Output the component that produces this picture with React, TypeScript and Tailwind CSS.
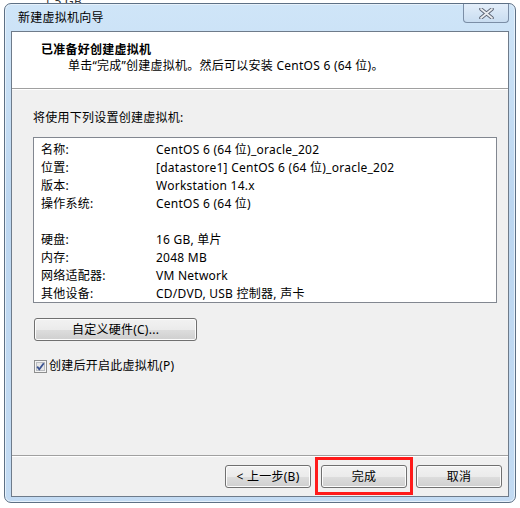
import React from "react";

const rows: [string, string][] = [
  ["名称:", "CentOS 6 (64 位)_oracle_202"],
  ["位置:", "[datastore1] CentOS 6 (64 位)_oracle_202"],
  ["版本:", "Workstation 14.x"],
  ["操作系统:", "CentOS 6 (64 位)"],
  ["", ""],
  ["硬盘:", "16 GB, 单片"],
  ["内存:", "2048 MB"],
  ["网络适配器:", "VM Network"],
  ["其他设备:", "CD/DVD, USB 控制器, 声卡"],
];

function WinButton({
  children,
  className = "",
}: {
  children: React.ReactNode;
  className?: string;
}) {
  return (
    <button
      type="button"
      className={
        "h-[23px] rounded-[3px] border border-[#707070] bg-[linear-gradient(#f2f2f2_0%,#ebebeb_50%,#dddddd_51%,#cfcfcf_100%)] text-[12px] leading-none text-black shadow-[inset_0_0_0_1px_#fcfcfc] " +
        className
      }
    >
      {children}
    </button>
  );
}

function CheckBox() {
  return (
    <svg width="13" height="13" viewBox="0 0 13 13">
      <rect x="0.5" y="0.5" width="12" height="12" fill="#f4f4f4" stroke="#8e8f8f" />
      <rect x="2.5" y="2.5" width="8" height="8" fill="#e6e6e6" stroke="#b9bcc0" />
      <path d="M3.2 6.6 L5.3 9.2 L9.8 3.3" fill="none" stroke="#3a5392" strokeWidth="1.8" />
    </svg>
  );
}

export default function App() {
  return (
    <div className="relative w-[520px] h-[508px] bg-white overflow-hidden font-['Noto_Sans','Noto_Sans_CJK_SC',sans-serif] text-[12px] tracking-[0.25px] text-black">
      <div className="absolute left-[44px] top-[-7px] text-[12px] text-[#333]">1.5 GB</div>

      <div className="relative ml-[4px] mt-[3px] w-[512px] h-[500px] rounded-[7px] border border-[#5d7085] bg-[linear-gradient(180deg,#cfe5f8_0%,#bcd6f0_40%,#c3dbf3_100%)] shadow-[inset_0_0_0_1px_#e6f1fb] flex flex-col px-[6px] pb-[5px]">
        {/* title bar */}
        <div className="h-[27px] flex items-start justify-between">
          <span className="pl-[7px] pt-[6px] text-[12px] leading-[16px]">新建虚拟机向导</span>
          <div className="w-[46px] h-[19px] rounded-b-[4px] border border-t-0 border-[#7b8ea6] bg-[linear-gradient(#e3eefa,#c9ddf1)] flex items-center justify-center">
            <svg width="15" height="11" viewBox="0 0 15 11">
              <path d="M2 1 L13 10 M13 1 L2 10" stroke="#5a6272" strokeWidth="3.6" strokeLinecap="round" />
              <path d="M2 1 L13 10 M13 1 L2 10" stroke="#e9ecf0" strokeWidth="1.8" strokeLinecap="round" />
            </svg>
          </div>
        </div>

        {/* client area */}
        <div className="flex-1 flex flex-col border border-[#6e7b8a] bg-[#f0f0f0]">
          <div className="h-[57px] bg-white border-b border-[#a0a0a0] shadow-[0_1px_0_#ffffff] pl-[29px] pt-[10px]">
            <div className="font-bold leading-[16px]">已准备好创建虚拟机</div>
            <div className="pl-[27px] leading-[16px]">单击“完成”创建虚拟机。然后可以安装 CentOS 6 (64 位)。</div>
          </div>

          <div className="flex-1 pl-[21px] pr-[11px] pt-[21px]">
            <div className="leading-[16px]">将使用下列设置创建虚拟机:</div>
            <div className="mt-[11px] h-[166px] border border-[#828790] bg-white pt-[3px] pl-[7px]">
              {rows.map(([k, v], i) => (
                <div key={i} className="h-[18px] flex items-center leading-[16px]">
                  <span className="w-[115px] shrink-0">{k}</span>
                  <span>{v}</span>
                </div>
              ))}
            </div>
            <WinButton className="mt-[15px] ml-[1px] w-[163px]">
              自定义硬件(<span>C</span>)...
            </WinButton>
            <div className="mt-[17px] ml-[1px] flex items-center gap-[2px]">
              <CheckBox />
              <span className="leading-[16px]">创建后开启此虚拟机(P)</span>
            </div>
          </div>

          <div className="h-[41px] border-t border-[#a0a0a0] shadow-[inset_0_1px_0_#ffffff] flex justify-end items-start pt-[9px] pr-[6px] gap-[9px]">
            <WinButton className="w-[86px]">&lt; 上一步(B)</WinButton>
            <div className="relative ml-[1px]">
              <WinButton className="w-[86px]">完成</WinButton>
              <div className="absolute left-[-6px] right-[-6px] top-[-8px] bottom-[-7px] border-[3px] border-[#ff1a1a]" />
            </div>
            <WinButton className="w-[86px]">取消</WinButton>
          </div>
        </div>
      </div>
    </div>
  );
}
